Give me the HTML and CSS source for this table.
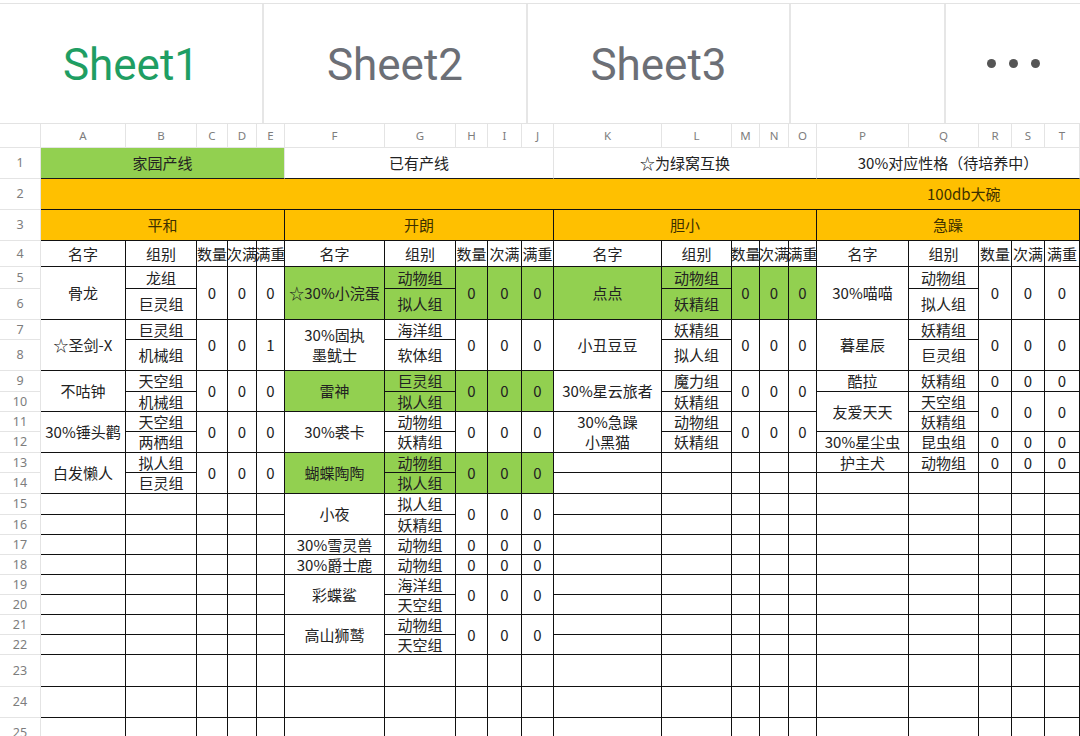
FILE: index.html
```html
<!DOCTYPE html>
<html lang="zh-CN">
<head>
<meta charset="utf-8">
<title>Sheet1</title>
<link rel="stylesheet" href="styles.css">
</head>
<body>
<div class="tabs">
  <div class="tab active">Sheet1</div>
  <div class="tab">Sheet2</div>
  <div class="tab">Sheet3</div>
  <div class="tab"></div>
  <div class="tab more"><span class="dot"></span><span class="dot"></span><span class="dot"></span></div>
</div>
<div class="sheet">
  <div class="corner"></div>
  <div class="h">A</div><div class="h">B</div><div class="h">C</div><div class="h">D</div><div class="h">E</div>
  <div class="h">F</div><div class="h">G</div><div class="h">H</div><div class="h">I</div><div class="h">J</div>
  <div class="h">K</div><div class="h">L</div><div class="h">M</div><div class="h">N</div><div class="h">O</div>
  <div class="h">P</div><div class="h">Q</div><div class="h">R</div><div class="h">S</div><div class="h">T</div>

  <div class="n">1</div>
  <div class="top g c5">家园产线</div>
  <div class="top c5">已有产线</div>
  <div class="top c5">☆为绿窝互换</div>
  <div class="top c5">30%对应性格（待培养中）</div>

  <div class="n">2</div>
  <div class="x o c20 band">100db大碗</div>

  <div class="n">3</div>
  <div class="x o c5">平和</div><div class="x o c5">开朗</div><div class="x o c5">胆小</div><div class="x o c5">急躁</div>

  <div class="n">4</div>
  <div class="x">名字</div><div class="x">组别</div><div class="x">数量</div><div class="x">次满</div><div class="x">满重</div>
  <div class="x">名字</div><div class="x">组别</div><div class="x">数量</div><div class="x">次满</div><div class="x">满重</div>
  <div class="x">名字</div><div class="x">组别</div><div class="x">数量</div><div class="x">次满</div><div class="x">满重</div>
  <div class="x">名字</div><div class="x">组别</div><div class="x">数量</div><div class="x">次满</div><div class="x">满重</div>

  <div class="n">5</div>
  <div class="x s2">骨龙</div><div class="x">龙组</div><div class="x s2">0</div><div class="x s2">0</div><div class="x s2">0</div>
  <div class="x g s2">☆30%小浣蛋</div><div class="x g">动物组</div><div class="x g s2">0</div><div class="x g s2">0</div><div class="x g s2">0</div>
  <div class="x g s2">点点</div><div class="x g">动物组</div><div class="x g s2">0</div><div class="x g s2">0</div><div class="x g s2">0</div>
  <div class="x s2">30%喵喵</div><div class="x">动物组</div><div class="x s2">0</div><div class="x s2">0</div><div class="x s2">0</div>

  <div class="n">6</div>
  <div class="x">巨灵组</div><div class="x g">拟人组</div><div class="x g">妖精组</div><div class="x">拟人组</div>

  <div class="n">7</div>
  <div class="x s2">☆圣剑-X</div><div class="x">巨灵组</div><div class="x s2">0</div><div class="x s2">0</div><div class="x s2">1</div>
  <div class="x s2 two">30%固执<br>墨鱿士</div><div class="x">海洋组</div><div class="x s2">0</div><div class="x s2">0</div><div class="x s2">0</div>
  <div class="x s2">小丑豆豆</div><div class="x">妖精组</div><div class="x s2">0</div><div class="x s2">0</div><div class="x s2">0</div>
  <div class="x s2">暮星辰</div><div class="x">妖精组</div><div class="x s2">0</div><div class="x s2">0</div><div class="x s2">0</div>

  <div class="n">8</div>
  <div class="x">机械组</div><div class="x">软体组</div><div class="x">拟人组</div><div class="x">巨灵组</div>

  <div class="n">9</div>
  <div class="x s2">不咕钟</div><div class="x">天空组</div><div class="x s2">0</div><div class="x s2">0</div><div class="x s2">0</div>
  <div class="x g s2">雷神</div><div class="x g">巨灵组</div><div class="x g s2">0</div><div class="x g s2">0</div><div class="x g s2">0</div>
  <div class="x s2">30%星云旅者</div><div class="x">魔力组</div><div class="x s2">0</div><div class="x s2">0</div><div class="x s2">0</div>
  <div class="x">酷拉</div><div class="x">妖精组</div><div class="x">0</div><div class="x">0</div><div class="x">0</div>

  <div class="n">10</div>
  <div class="x">机械组</div><div class="x g">拟人组</div><div class="x">妖精组</div>
  <div class="x s2">友爱天天</div><div class="x">天空组</div><div class="x s2">0</div><div class="x s2">0</div><div class="x s2">0</div>

  <div class="n">11</div>
  <div class="x s2">30%锤头鹳</div><div class="x">天空组</div><div class="x s2">0</div><div class="x s2">0</div><div class="x s2">0</div>
  <div class="x s2">30%裘卡</div><div class="x">动物组</div><div class="x s2">0</div><div class="x s2">0</div><div class="x s2">0</div>
  <div class="x s2 two">30%急躁<br>小黑猫</div><div class="x">动物组</div><div class="x s2">0</div><div class="x s2">0</div><div class="x s2">0</div>
  <div class="x">妖精组</div>

  <div class="n">12</div>
  <div class="x">两栖组</div><div class="x">妖精组</div><div class="x">妖精组</div>
  <div class="x">30%星尘虫</div><div class="x">昆虫组</div><div class="x">0</div><div class="x">0</div><div class="x">0</div>

  <div class="n">13</div>
  <div class="x s2">白发懒人</div><div class="x">拟人组</div><div class="x s2">0</div><div class="x s2">0</div><div class="x s2">0</div>
  <div class="x g s2">蝴蝶陶陶</div><div class="x g">动物组</div><div class="x g s2">0</div><div class="x g s2">0</div><div class="x g s2">0</div>
  <div class="x"></div><div class="x"></div><div class="x"></div><div class="x"></div><div class="x"></div>
  <div class="x">护主犬</div><div class="x">动物组</div><div class="x">0</div><div class="x">0</div><div class="x">0</div>

  <div class="n">14</div>
  <div class="x">巨灵组</div><div class="x g">拟人组</div>
  <div class="x"></div><div class="x"></div><div class="x"></div><div class="x"></div><div class="x"></div>
  <div class="x"></div><div class="x"></div><div class="x"></div><div class="x"></div><div class="x"></div>

  <div class="n">15</div>
  <div class="x"></div><div class="x"></div><div class="x"></div><div class="x"></div><div class="x"></div>
  <div class="x s2">小夜</div><div class="x">拟人组</div><div class="x s2">0</div><div class="x s2">0</div><div class="x s2">0</div>
  <div class="x"></div><div class="x"></div><div class="x"></div><div class="x"></div><div class="x"></div>
  <div class="x"></div><div class="x"></div><div class="x"></div><div class="x"></div><div class="x"></div>

  <div class="n">16</div>
  <div class="x"></div><div class="x"></div><div class="x"></div><div class="x"></div><div class="x"></div>
  <div class="x">妖精组</div>
  <div class="x"></div><div class="x"></div><div class="x"></div><div class="x"></div><div class="x"></div>
  <div class="x"></div><div class="x"></div><div class="x"></div><div class="x"></div><div class="x"></div>

  <div class="n">17</div>
  <div class="x"></div><div class="x"></div><div class="x"></div><div class="x"></div><div class="x"></div>
  <div class="x">30%雪灵兽</div><div class="x">动物组</div><div class="x">0</div><div class="x">0</div><div class="x">0</div>
  <div class="x"></div><div class="x"></div><div class="x"></div><div class="x"></div><div class="x"></div>
  <div class="x"></div><div class="x"></div><div class="x"></div><div class="x"></div><div class="x"></div>

  <div class="n">18</div>
  <div class="x"></div><div class="x"></div><div class="x"></div><div class="x"></div><div class="x"></div>
  <div class="x">30%爵士鹿</div><div class="x">动物组</div><div class="x">0</div><div class="x">0</div><div class="x">0</div>
  <div class="x"></div><div class="x"></div><div class="x"></div><div class="x"></div><div class="x"></div>
  <div class="x"></div><div class="x"></div><div class="x"></div><div class="x"></div><div class="x"></div>

  <div class="n">19</div>
  <div class="x"></div><div class="x"></div><div class="x"></div><div class="x"></div><div class="x"></div>
  <div class="x s2">彩蝶鲨</div><div class="x">海洋组</div><div class="x s2">0</div><div class="x s2">0</div><div class="x s2">0</div>
  <div class="x"></div><div class="x"></div><div class="x"></div><div class="x"></div><div class="x"></div>
  <div class="x"></div><div class="x"></div><div class="x"></div><div class="x"></div><div class="x"></div>

  <div class="n">20</div>
  <div class="x"></div><div class="x"></div><div class="x"></div><div class="x"></div><div class="x"></div>
  <div class="x">天空组</div>
  <div class="x"></div><div class="x"></div><div class="x"></div><div class="x"></div><div class="x"></div>
  <div class="x"></div><div class="x"></div><div class="x"></div><div class="x"></div><div class="x"></div>

  <div class="n">21</div>
  <div class="x"></div><div class="x"></div><div class="x"></div><div class="x"></div><div class="x"></div>
  <div class="x s2">高山狮鹫</div><div class="x">动物组</div><div class="x s2">0</div><div class="x s2">0</div><div class="x s2">0</div>
  <div class="x"></div><div class="x"></div><div class="x"></div><div class="x"></div><div class="x"></div>
  <div class="x"></div><div class="x"></div><div class="x"></div><div class="x"></div><div class="x"></div>

  <div class="n">22</div>
  <div class="x"></div><div class="x"></div><div class="x"></div><div class="x"></div><div class="x"></div>
  <div class="x">天空组</div>
  <div class="x"></div><div class="x"></div><div class="x"></div><div class="x"></div><div class="x"></div>
  <div class="x"></div><div class="x"></div><div class="x"></div><div class="x"></div><div class="x"></div>

  <div class="n">23</div>
  <div class="x"></div><div class="x"></div><div class="x"></div><div class="x"></div><div class="x"></div>
  <div class="x"></div><div class="x"></div><div class="x"></div><div class="x"></div><div class="x"></div>
  <div class="x"></div><div class="x"></div><div class="x"></div><div class="x"></div><div class="x"></div>
  <div class="x"></div><div class="x"></div><div class="x"></div><div class="x"></div><div class="x"></div>

  <div class="n">24</div>
  <div class="x"></div><div class="x"></div><div class="x"></div><div class="x"></div><div class="x"></div>
  <div class="x"></div><div class="x"></div><div class="x"></div><div class="x"></div><div class="x"></div>
  <div class="x"></div><div class="x"></div><div class="x"></div><div class="x"></div><div class="x"></div>
  <div class="x"></div><div class="x"></div><div class="x"></div><div class="x"></div><div class="x"></div>

  <div class="n">25</div>
  <div class="x"></div><div class="x"></div><div class="x"></div><div class="x"></div><div class="x"></div>
  <div class="x"></div><div class="x"></div><div class="x"></div><div class="x"></div><div class="x"></div>
  <div class="x"></div><div class="x"></div><div class="x"></div><div class="x"></div><div class="x"></div>
  <div class="x"></div><div class="x"></div><div class="x"></div><div class="x"></div><div class="x"></div>
</div>
</body>
</html>
```

FILE: styles.css
```css
* {
  box-sizing: border-box;
  margin: 0;
  padding: 0;
}

html, body {
  width: 1080px;
  height: 736px;
  overflow: hidden;
  background: #ffffff;
}

body {
  font-family: "Noto Sans CJK SC", "Noto Sans", sans-serif;
  color: #222222;
}

/* ---------- sheet tabs ---------- */
.tabs {
  display: grid;
  grid-template-columns: 264px 264px 263px 155px 134px;
  height: 120px;
  margin-top: 3px;
  border-top: 1px solid #e3e3e3;
}

.tab {
  display: flex;
  align-items: center;
  justify-content: center;
  border-right: 2px solid #e6e6e6;
  font-family: Roboto, "Liberation Sans", sans-serif;
  font-size: 44px;
  color: #6c6f76;
  padding-top: 2px;
}

.tab.active {
  color: #1f9e63;
}

.tab.more {
  border-right: none;
  gap: 13px;
  padding-top: 0;
}

.dot {
  width: 9px;
  height: 9px;
  border-radius: 50%;
  background: #555555;
}

/* ---------- grid ---------- */
.sheet {
  display: grid;
  grid-template-columns:
    41px 85px 71px 31px 29px 28px
    100px 71px 32px 34px 32px
    108px 70px 28px 29px 28px
    92px 70px 33px 33px 35px;
  grid-template-rows:
    24px 31px 31px 31px 26px
    22px 31px 20px 31px 21px 20px 20px 21px 20px 21px
    21px 20px 20px 20px 20px 20px 20px 20px
    32px 31px 31px;
  border-top: 1px solid #e3e3e3;
}

.corner,
.h,
.n {
  display: flex;
  align-items: center;
  justify-content: center;
  border-right: 1px solid #e4e4e4;
  border-bottom: 1px solid #e4e4e4;
  font-family: "Noto Sans", sans-serif;
  color: #7d7d7d;
}

.h {
  font-size: 11.5px;
}

.n {
  font-size: 12.5px;
  line-height: 14px;
  background: #ffffff;
}

.top {
  display: flex;
  align-items: center;
  justify-content: center;
  font-size: 15px;
  border-right: 1px solid #e3e3e3;
  border-bottom: 1px solid #1a1a1a;
  white-space: nowrap;
  padding-bottom: 2px;
}

.x {
  display: flex;
  align-items: center;
  justify-content: center;
  text-align: center;
  white-space: nowrap;
  font-size: 15px;
  line-height: 18px;
  border-right: 1px solid #111111;
  border-bottom: 1px solid #111111;
}

.x.two {
  line-height: 20px;
}

.g {
  background: #92d050;
}

.o {
  background: #ffc000;
  color: #3d3000;
}

.band {
  justify-content: flex-start;
  padding-left: 886px;
  border-right: none;
}

.c5 {
  grid-column: span 5;
}

.c20 {
  grid-column: span 20;
}

.s2 {
  grid-row: span 2;
}
```
